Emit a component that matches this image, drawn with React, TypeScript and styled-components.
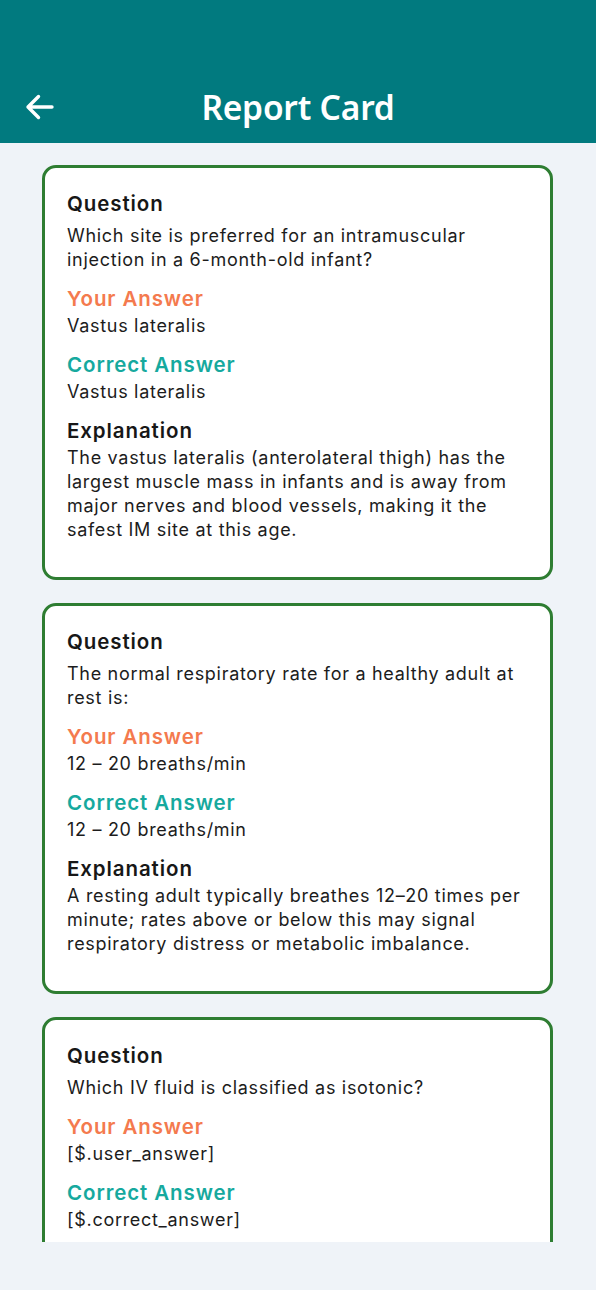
import styled, { createGlobalStyle } from 'styled-components'

const GlobalStyle = createGlobalStyle`
  html, body {
    margin: 0;
    padding: 0;
    background: #eff3f8;
  }
  * {
    box-sizing: border-box;
  }
`

const Screen = styled.div`
  width: 596px;
  height: 1290px;
  display: flex;
  flex-direction: column;
  background: #eff3f8;
  font-family: Inter, 'Noto Sans', sans-serif;
`

const Header = styled.header`
  height: 143px;
  flex-shrink: 0;
  background: #017a7f;
  padding: 71px 24px 0;
  display: grid;
  grid-template-columns: 1fr auto 1fr;
  align-items: start;
`

const BackButton = styled.button`
  justify-self: start;
  width: 34px;
  height: 72px;
  padding: 0;
  border: none;
  background: transparent;
  display: flex;
  align-items: center;
  cursor: pointer;
`

const Title = styled.h1`
  margin: 0;
  height: 72px;
  display: flex;
  align-items: center;
  color: #ffffff;
  font-family: 'Noto Sans', 'Open Sans', sans-serif;
  font-size: 33.5px;
  font-weight: 600;
  letter-spacing: -0.2px;
`

const List = styled.main`
  height: 1099px;
  flex-shrink: 0;
  overflow: hidden;
  padding: 22px 43px 0 42px;
  display: flex;
  flex-direction: column;
  gap: 23px;
`

const Card = styled.section`
  flex-shrink: 0;
  background: #ffffff;
  border: 3px solid #2e7d32;
  border-radius: 14px;
  padding: 22px 21px 35px 22px;
`

const Label = styled.h2<{ $tone: 'dark' | 'orange' | 'teal' }>`
  margin: 13px 0 0;
  font-size: 20.5px;
  line-height: 28px;
  font-weight: 600;
  letter-spacing: 0.9px;
  color: ${p => (p.$tone === 'orange' ? '#f47a4e' : p.$tone === 'teal' ? '#16a99e' : '#171717')};

  &:first-child {
    margin-top: 0;
  }
`

const Body = styled.p<{ $gap?: number }>`
  margin: ${p => p.$gap ?? 1}px 0 0;
  font-size: 18px;
  line-height: 24px;
  font-weight: 400;
  letter-spacing: 0.7px;
  color: #1c1c1c;
`

type Item = {
  question: string
  yourAnswer: string
  correctAnswer: string
  explanation?: string
}

const items: Item[] = [
  {
    question: 'Which site is preferred for an intramuscular injection in a 6-month-old infant?',
    yourAnswer: 'Vastus lateralis',
    correctAnswer: 'Vastus lateralis',
    explanation:
      'The vastus lateralis (anterolateral thigh) has the largest muscle mass in infants and is away from major nerves and blood vessels, making it the safest IM site at this age.',
  },
  {
    question: 'The normal respiratory rate for a healthy adult at rest is:',
    yourAnswer: '12 \u2013 20 breaths/min',
    correctAnswer: '12 \u2013 20 breaths/min',
    explanation:
      'A resting adult typically breathes 12\u201320 times per minute; rates above or below this may signal respiratory distress or metabolic imbalance.',
  },
  {
    question: 'Which IV fluid is classified as isotonic?',
    yourAnswer: '[$.user_answer]',
    correctAnswer: '[$.correct_answer]',
    explanation: '[$.explanation]',
  },
]

const ArrowBack = () => (
  <svg width="30" height="28" viewBox="0 0 30 28" fill="none">
    <path
      d="M28 14H4M14.5 3.5 4 14l10.5 10.5"
      stroke="#ffffff"
      strokeWidth="3.4"
      strokeLinecap="round"
      strokeLinejoin="round"
    />
  </svg>
)

export default function App() {
  return (
    <Screen>
      <GlobalStyle />
      <Header>
        <BackButton aria-label="Back">
          <ArrowBack />
        </BackButton>
        <Title>Report Card</Title>
        <span />
      </Header>
      <List>
        {items.map((item, i) => (
          <Card key={i}>
            <Label $tone="dark">Question</Label>
            <Body $gap={6}>{item.question}</Body>
            <Label $tone="orange">Your Answer</Label>
            <Body>{item.yourAnswer}</Body>
            <Label $tone="teal">Correct Answer</Label>
            <Body>{item.correctAnswer}</Body>
            {item.explanation && (
              <>
                <Label $tone="dark">Explanation</Label>
                <Body>{item.explanation}</Body>
              </>
            )}
          </Card>
        ))}
      </List>
    </Screen>
  )
}
